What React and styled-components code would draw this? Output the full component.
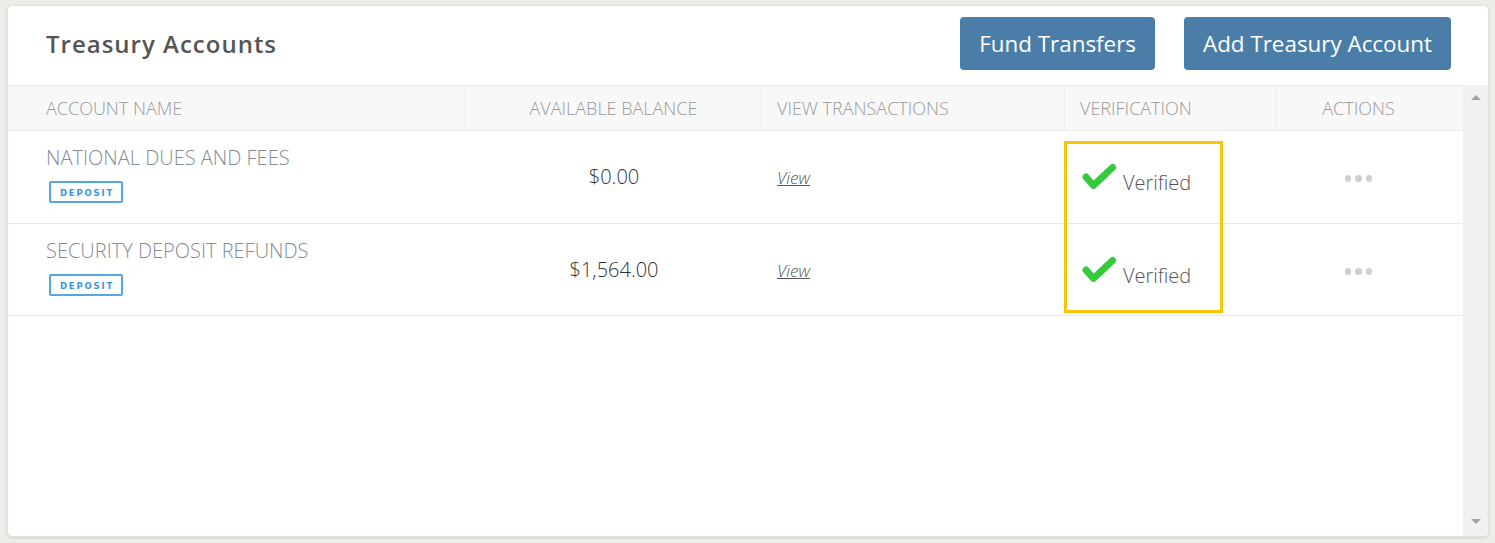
import React from "react";
import styled, { createGlobalStyle } from "styled-components";

const Global = createGlobalStyle`
  html, body { margin: 0; padding: 0; }
  body { background: #edece8; font-family: "Open Sans", "Liberation Sans", sans-serif; }
  * { box-sizing: border-box; }
`;

const Page = styled.div`
  padding: 5px 6px 6px 7px;
`;

const Card = styled.div`
  position: relative;
  background: #fff;
  border: 1px solid #e2e1dd;
  border-radius: 5px;
  box-shadow: 0 1px 3px rgba(0, 0, 0, 0.12);
  height: 532px;
  display: flex;
  flex-direction: column;
  overflow: hidden;
`;

const Header = styled.div`
  height: 79px;
  display: flex;
  align-items: flex-start;
  justify-content: space-between;
  padding: 11px 37px 0 38px;
`;

const Title = styled.h1`
  margin: 0;
  padding-top: 13px;
  font-family: "Open Sans", sans-serif;
  font-weight: 600;
  font-size: 24px;
  line-height: 28px;
  letter-spacing: 1px;
  color: #555;
`;

const Actions = styled.div`
  display: flex;
  gap: 29px;
`;

const Button = styled.button`
  height: 53px;
  padding: 0 19px;
  border: none;
  border-radius: 4px;
  background: #4a7ea8;
  color: #fff;
  font-family: "Open Sans", sans-serif;
  font-size: 22.4px;
  cursor: pointer;
`;

const Body = styled.div`
  flex: 1;
  display: flex;
  min-height: 0;
`;

const TableArea = styled.div`
  flex: 1;
  display: flex;
  flex-direction: column;
`;

const Grid = styled.div`
  display: grid;
  grid-template-columns: 458px 296px 303px 212px 186px;
`;

const HeadRow = styled(Grid)`
  height: 46px;
  background: #f8f8f8;
  border-top: 1px solid #ececec;
  border-bottom: 1px solid #ececec;
`;

const HeadCell = styled.div`
  display: flex;
  align-items: center;
  justify-content: ${(p) => (p.$align === "center" ? "center" : "flex-start")};
  padding: ${(p) => p.$pad || "0 15px"};
  border-right: ${(p) => (p.$last ? "none" : "1px solid #ececec")};
  font-size: 18px;
  font-weight: 300;
  color: #9a9a9a;
  text-transform: uppercase;
`;

const Row = styled(Grid)`
  height: ${(p) => p.$h}px;
  border-bottom: 1px solid #e8e8e8;
`;

const Cell = styled.div`
  display: flex;
  flex-direction: column;
  justify-content: flex-start;
  align-items: ${(p) => (p.$align === "center" ? "center" : "flex-start")};
  padding: ${(p) => p.$pad || "0 15px"};
`;

const Name = styled.div`
  font-size: 20px;
  font-weight: 300;
  color: #858c94;
  line-height: 24px;
`;

const Badge = styled.span`
  margin-top: 11px;
  margin-left: 3px;
  display: inline-flex;
  align-items: center;
  justify-content: center;
  width: 74px;
  height: 22px;
  padding: 1px 0 0 2px;
  border: 2px solid #55a6e4;
  border-radius: 2px;
  color: #3b96dc;
  font-family: "DejaVu Sans", sans-serif;
  font-weight: 700;
  font-size: 8.5px;
  letter-spacing: 1.8px;
`;

const Amount = styled.div`
  font-size: 20px;
  font-weight: 300;
  color: #333;
  line-height: 24px;
`;

const ViewLink = styled.a`
  font-size: 17px;
  font-weight: 300;
  font-style: italic;
  color: #555;
  text-decoration: underline;
  line-height: 20px;
`;

const Verified = styled.div`
  display: flex;
  align-items: flex-start;
  gap: 5px;
`;

const VerifiedText = styled.span`
  margin-top: 8px;
  font-size: 20px;
  font-weight: 300;
  line-height: 24px;
  color: #555;
`;

const Dots = styled.div`
  display: flex;
  gap: 4px;
`;

const Dot = styled.span`
  width: 6.5px;
  height: 6.5px;
  border-radius: 50%;
  background: #d0d0d0;
`;

const Scrollbar = styled.div`
  width: 25px;
  background: #f1f1f1;
  display: flex;
  flex-direction: column;
  justify-content: space-between;
  align-items: center;
  padding: 10px 0 12px;
`;

const Arrow = styled.span`
  width: 0;
  height: 0;
  border-left: 5px solid transparent;
  border-right: 5px solid transparent;
  ${(p) => (p.$down ? "border-top: 5px solid #a3a3a3;" : "border-bottom: 5px solid #a3a3a3;")}
`;

const Highlight = styled.div`
  position: absolute;
  left: 1056px;
  top: 135px;
  width: 159px;
  height: 172px;
  border: 3px solid #fac508;
  pointer-events: none;
`;

const Check = () => (
  <svg width="36" height="28" viewBox="0 0 36 28">
    <polyline
      points="4,14 11.5,22.5 30.5,4.5"
      fill="none"
      stroke="#35c93c"
      strokeWidth="7"
      strokeLinecap="round"
      strokeLinejoin="round"
    />
  </svg>
);

const rows = [
  { name: "NATIONAL DUES AND FEES", amount: "$0.00", h: 93 },
  { name: "SECURITY DEPOSIT REFUNDS", amount: "$1,564.00", h: 92 },
];

export default function App() {
  return (
    <>
      <Global />
      <Page>
        <Card>
          <Header>
            <Title>Treasury Accounts</Title>
            <Actions>
              <Button>Fund Transfers</Button>
              <Button>Add Treasury Account</Button>
            </Actions>
          </Header>
          <Body>
            <TableArea>
              <HeadRow>
                <HeadCell $pad="0 0 0 38px">Account Name</HeadCell>
                <HeadCell $align="center">Available Balance</HeadCell>
                <HeadCell>View Transactions</HeadCell>
                <HeadCell>Verification</HeadCell>
                <HeadCell $align="center" $pad="0 23px 0 0" $last>
                  Actions
                </HeadCell>
              </HeadRow>
              {rows.map((r) => (
                <Row key={r.name} $h={r.h}>
                  <Cell $pad="15px 0 0 38px">
                    <Name>{r.name}</Name>
                    <Badge>DEPOSIT</Badge>
                  </Cell>
                  <Cell $align="center" $pad="34px 0 0">
                    <Amount>{r.amount}</Amount>
                  </Cell>
                  <Cell $pad="37px 15px 0">
                    <ViewLink>View</ViewLink>
                  </Cell>
                  <Cell $pad="32px 15px 0 17px">
                    <Verified>
                      <Check />
                      <VerifiedText>Verified</VerifiedText>
                    </Verified>
                  </Cell>
                  <Cell $align="center" $pad="44px 23px 0 0">
                    <Dots>
                      <Dot />
                      <Dot />
                      <Dot />
                    </Dots>
                  </Cell>
                </Row>
              ))}
            </TableArea>
            <Scrollbar>
              <Arrow />
              <Arrow $down />
            </Scrollbar>
          </Body>
          <Highlight />
        </Card>
      </Page>
    </>
  );
}
